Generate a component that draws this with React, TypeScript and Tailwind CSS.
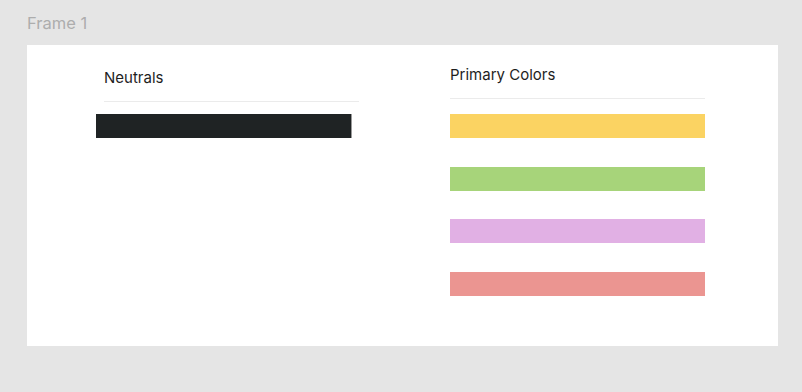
const PRIMARY = ["bg-[#fbd362]", "bg-[#a7d47a]", "bg-[#e1b0e4]", "bg-[#eb9591]"];

export default function App() {
  return (
    <div className="h-[392px] w-[802px] bg-[#e5e5e5] px-[27px] pt-[13px] font-['Inter',sans-serif]">
      <p className="text-[16.5px] leading-[21px] text-[#adadad]">Frame 1</p>
      <div className="mt-[11px] flex h-[301px] w-[751px] bg-white pl-[77px]">
        <section className="w-[255px] pt-[24px]">
          <h2 className="border-b border-[#ebebeb] pb-[14px] text-[15px] leading-[18px] text-[#1e1e1e]">
            Neutrals
          </h2>
          <div className="-ml-2 mt-[12px] h-[24px] w-[256px] border-r border-[#9a9a9a] bg-[#1f2324]" />
        </section>
        <section className="ml-[91px] w-[255px] pt-[21px]">
          <h2 className="border-b border-[#ebebeb] pb-[14px] text-[15px] leading-[18px] text-[#1e1e1e]">
            Primary Colors
          </h2>
          <div className="mt-[15px] flex flex-col gap-[28.5px]">
            {PRIMARY.map((c) => (
              <div key={c} className={`h-[24px] w-[255px] ${c}`} />
            ))}
          </div>
        </section>
      </div>
    </div>
  );
}
